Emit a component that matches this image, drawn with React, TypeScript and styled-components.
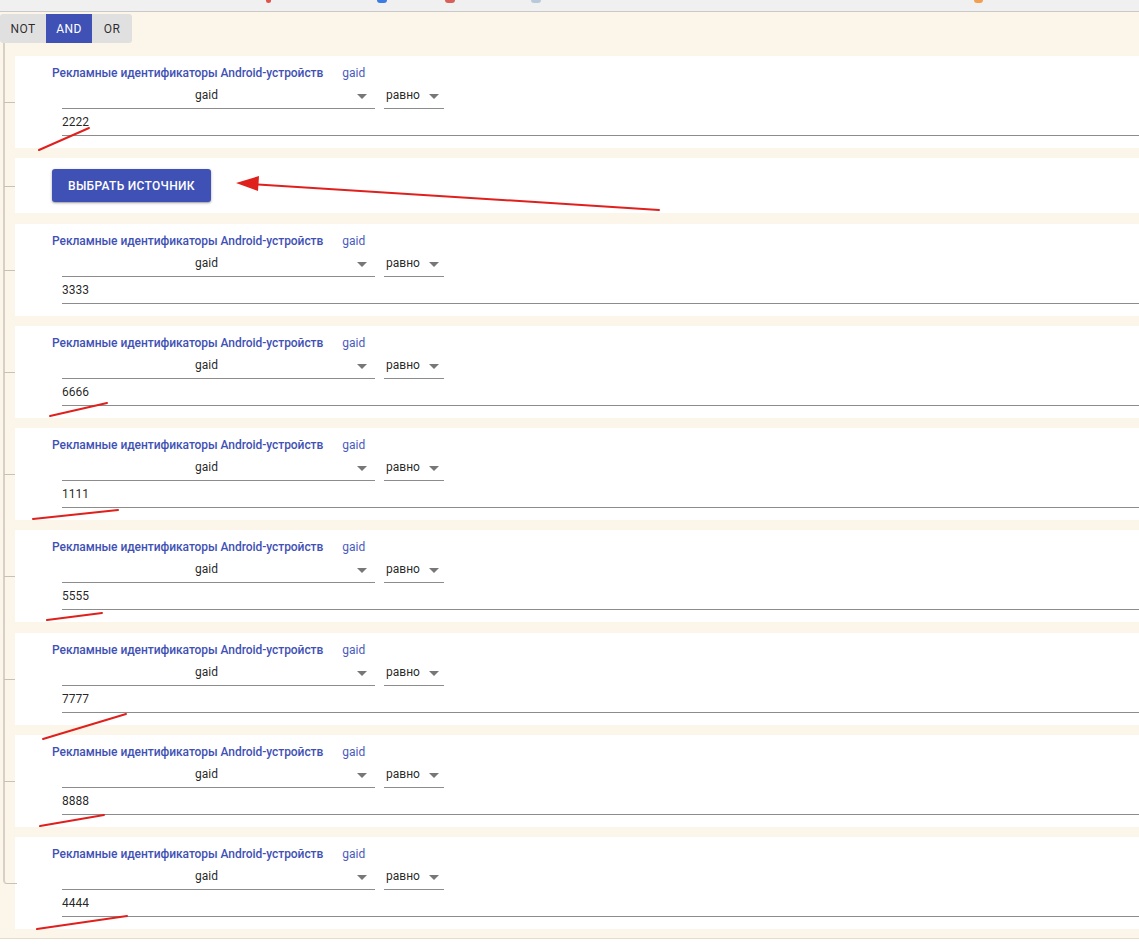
import React from "react";
import styled, { createGlobalStyle } from "styled-components";

const GlobalStyle = createGlobalStyle`
  html, body { margin: 0; padding: 0; background: #ffffff; }
  body { font-family: Roboto, "Noto Sans", Arial, sans-serif; overflow: hidden; }
  * { box-sizing: border-box; }
`;

const Page = styled.div`
  position: relative;
  width: 1139px;
  height: 949px;
  overflow: hidden;
  background: #ffffff;
`;

const BookmarkBar = styled.div`
  height: 12px;
  background: #f0f0f0;
  border-bottom: 1px solid #c9c9c9;
  display: flex;
  align-items: flex-start;
  overflow: hidden;
`;

const Fav = styled.span<{ $offset: number; $color: string; $w: number }>`
  display: block;
  margin-left: ${(p) => p.$offset}px;
  width: ${(p) => p.$w}px;
  height: 3px;
  background: ${(p) => p.$color};
  border-radius: 0 0 3px 3px;
  flex: none;
`;

const Panel = styled.div`
  background: #fcf5e9;
  border-bottom: 1px solid #e6dccb;
  padding: 2px 0 9px 0;
  overflow: hidden;
`;

const Toggle = styled.div`
  display: inline-flex;
  height: 29px;
  background: #e0e0e0;
  border-radius: 3px;
  overflow: hidden;
`;

const ToggleBtn = styled.button<{ $active?: boolean; $w: number }>`
  border: 0;
  margin: 0;
  width: ${(p) => p.$w}px;
  padding: 0;
  font-family: Roboto, Arial, sans-serif;
  font-size: 12px;
  letter-spacing: 0.4px;
  text-transform: uppercase;
  background: ${(p) => (p.$active ? "#3f51b5" : "transparent")};
  color: ${(p) => (p.$active ? "#ffffff" : "rgba(0,0,0,0.82)")};
`;

const Tree = styled.div`
  margin-top: 13px;
  margin-right: -40px;
  padding-left: 15px;
  display: flex;
  flex-direction: column;
  gap: 10.3px;
`;

const Item = styled.div`
  position: relative;
  background: #ffffff;

  &::before {
    content: "";
    position: absolute;
    left: -12px;
    top: -10.3px;
    height: calc(100% + 10.3px);
    width: 12px;
    border-left: 2px solid #d8d0c4;
  }
  &:first-child::before {
    top: -13px;
    height: calc(100% + 13px);
  }
  &::after {
    content: "";
    position: absolute;
    left: -11px;
    top: 50%;
    width: 11px;
    border-top: 1px solid #c9c1b5;
  }
  &:last-child::before {
    height: calc(50% + 10.3px);
    border-bottom: 1px solid #c9c1b5;
    border-bottom-left-radius: 4px;
  }
  &:last-child::after {
    display: none;
  }
`;

const Card = styled.div`
  height: 92px;
  padding: 9px 0 12px 37px;
  display: flex;
  flex-direction: column;
`;

const TitleRow = styled.div`
  display: flex;
  align-items: center;
  gap: 19px;
  height: 16px;
  line-height: 16px;
  font-size: 12px;
  color: #3f51b5;
`;

const Title = styled.span`
  font-weight: 500;
  letter-spacing: -0.05px;
`;

const Key = styled.span`
  font-weight: 400;
  color: #4a5bbd;
`;

const SelectRow = styled.div`
  display: flex;
  gap: 9px;
  margin: 6px 0 0 10px;
`;

const Select = styled.div<{ $w: number }>`
  width: ${(p) => p.$w}px;
  height: 22px;
  border-bottom: 1px solid #8c8c8c;
  display: flex;
  align-items: flex-start;
  font-size: 12px;
  line-height: 16px;
  color: rgba(0, 0, 0, 0.87);
`;

const Value = styled.span<{ $center?: boolean }>`
  flex: ${(p) => (p.$center ? "1" : "none")};
  text-align: ${(p) => (p.$center ? "center" : "left")};
  padding-left: ${(p) => (p.$center ? "0" : "2px")};
`;

const Caret = styled.span<{ $gap: number; $end: number }>`
  width: 0;
  height: 0;
  margin-top: 7px;
  margin-left: ${(p) => p.$gap}px;
  margin-right: ${(p) => p.$end}px;
  border-left: 5px solid transparent;
  border-right: 5px solid transparent;
  border-top: 5px solid #777777;
`;

const Input = styled.div`
  margin-left: 10px;
  height: 27px;
  padding-top: 5px;
  border-bottom: 1px solid #8c8c8c;
  font-size: 12px;
  line-height: 16px;
  color: rgba(0, 0, 0, 0.87);
`;

const ButtonCard = styled.div`
  height: 55px;
  padding: 11px 0 11px 37px;
`;

const PrimaryButton = styled.button`
  height: 33px;
  padding: 0 16px;
  border: 0;
  border-radius: 3px;
  background: #3f51b5;
  color: #ffffff;
  font-family: Roboto, Arial, sans-serif;
  font-size: 12px;
  font-weight: 500;
  letter-spacing: 0.3px;
  text-transform: uppercase;
  box-shadow: 0 1px 3px rgba(0, 0, 0, 0.3), 0 1px 1px rgba(0, 0, 0, 0.14);
`;

const Overlay = styled.svg`
  position: absolute;
  left: 0;
  top: 0;
  pointer-events: none;
`;

const values = ["2222", null, "3333", "6666", "1111", "5555", "7777", "8888", "4444"];

const marks: [number, number, number, number][] = [
  [39, 150, 89, 128],
  [50, 416, 107, 403],
  [33, 519, 118, 510],
  [47, 620, 102, 613],
  [43, 739, 126, 714],
  [40, 826, 104, 815],
  [37, 929, 127, 916],
];

const favs = [
  { o: 266, c: "#e0524a", w: 5 },
  { o: 106, c: "#3b7be6", w: 10 },
  { o: 58, c: "#d9605a", w: 10 },
  { o: 76, c: "#b9c9dc", w: 10 },
  { o: 433, c: "#f0a050", w: 9 },
];

function Condition({ value }: { value: string }) {
  return (
    <Card>
      <TitleRow>
        <Title>Рекламные идентификаторы Android-устройств</Title>
        <Key>gaid</Key>
      </TitleRow>
      <SelectRow>
        <Select $w={313}>
          <Value $center>gaid</Value>
          <Caret $gap={6} $end={8} />
        </Select>
        <Select $w={60}>
          <Value>равно</Value>
          <Caret $gap={9} $end={0} />
        </Select>
      </SelectRow>
      <Input>{value}</Input>
    </Card>
  );
}

export default function App() {
  return (
    <Page>
      <GlobalStyle />
      <BookmarkBar>
        {favs.map((f, i) => (
          <Fav key={i} $offset={f.o} $color={f.c} $w={f.w} />
        ))}
      </BookmarkBar>
      <Panel>
        <Toggle>
          <ToggleBtn $w={46}>NOT</ToggleBtn>
          <ToggleBtn $w={46} $active>
            AND
          </ToggleBtn>
          <ToggleBtn $w={40}>OR</ToggleBtn>
        </Toggle>
        <Tree>
          {values.map((v, i) => (
            <Item key={i}>
              {v === null ? (
                <ButtonCard>
                  <PrimaryButton>Выбрать источник</PrimaryButton>
                </ButtonCard>
              ) : (
                <Condition value={v} />
              )}
            </Item>
          ))}
        </Tree>
      </Panel>
      <Overlay width={1139} height={949} viewBox="0 0 1139 949">
        <g stroke="#e0201c" strokeWidth={2} strokeLinecap="round" fill="none">
          {marks.map((m, i) => (
            <line key={i} x1={m[0]} y1={m[1]} x2={m[2]} y2={m[3]} />
          ))}
          <line x1={659} y1={210} x2={252} y2={184} />
        </g>
        <polygon points="236,183 259,176 258,191" fill="#e0201c" />
      </Overlay>
    </Page>
  );
}
